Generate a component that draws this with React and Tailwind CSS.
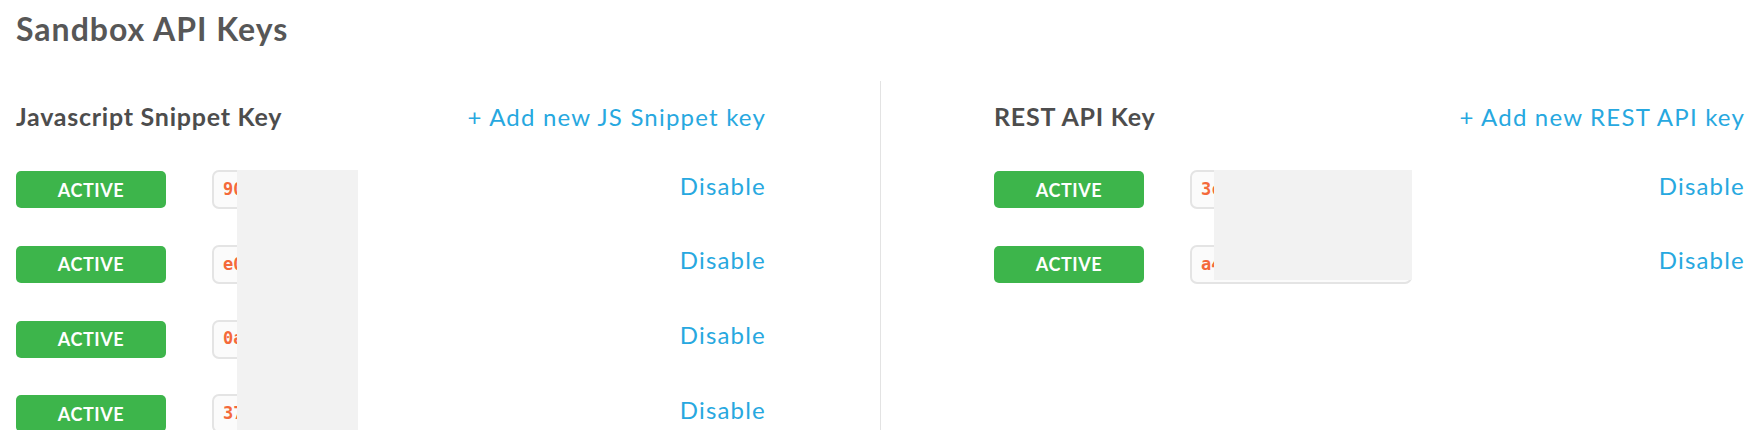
import React from "react";

function KeyRow({ k, boxW }) {
  return (
    <div className="flex items-center h-[39px]">
      <div className="w-[150px] h-[37px] rounded-[5px] bg-[#3db54b] flex items-center justify-center text-white font-bold text-[18px] tracking-[0.6px] leading-none">
        ACTIVE
      </div>
      <div
        className={`ml-[46px] h-[39px] ${boxW} rounded-[7px] border-2 border-[#e4e4e4] bg-[#fbfbfb] flex items-center pl-[9px] overflow-hidden whitespace-nowrap font-['DejaVu_Sans_Mono',monospace] text-[17px] font-bold text-[#f4693a]`}
      >
        {k}
      </div>
      <div className="ml-auto mb-[8px] text-[24px] tracking-[1.2px] text-[#27a8e0] leading-none">Disable</div>
    </div>
  );
}

function Column({ width, title, link, keys, boxW, overlay }) {
  return (
    <div className={width}>
      <div className="flex justify-between items-center h-[72px]">
        <div className="text-[25px] tracking-[0.75px] font-bold text-[#4d4d4d]">{title}</div>
        <div className="text-[24px] tracking-[1.2px] text-[#27a8e0]">{link}</div>
      </div>
      <div className="relative flex flex-col gap-[35.8px] mt-[17px]">
        {keys.map((k, i) => (
          <KeyRow key={i} k={k} boxW={boxW} />
        ))}
        {overlay}
      </div>
    </div>
  );
}

export default function App() {
  return (
    <div className="w-[1750px] h-[430px] overflow-hidden bg-white font-['Lato',sans-serif]">
      <h1 className="pl-4 pt-[5px] h-[81px] text-[32px] tracking-[1px] font-bold text-[#575757]">Sandbox API Keys</h1>
      <div className="flex pl-4">
        <Column
          width="w-[750px] shrink-0"
          title="Javascript Snippet Key"
          link="+ Add new JS Snippet key"
          keys={["90c3a1f7d2", "e07b4d9a1c", "0a6f2e8b31", "37d91c5e0a"]}
          boxW="w-[145px]"
          overlay={<div className="absolute left-[221px] top-0 w-[121px] h-[300px] bg-[#f2f2f2]" />}
        />
        <div className="ml-[114px] mr-[113px] w-px shrink-0 bg-[#e3e3e3] h-[349px]" />
        <Column
          width="w-[751px] shrink-0"
          title="REST API Key"
          link="+ Add new REST API key"
          keys={["3c08a9e1f4b27d65c0e9", "a41d7f2b09c6e83a5d17"]}
          boxW="w-[222px]"
          overlay={<div className="absolute left-[220px] top-0 w-[198px] h-[110px] bg-[#f2f2f2]" />}
        />
      </div>
    </div>
  );
}
